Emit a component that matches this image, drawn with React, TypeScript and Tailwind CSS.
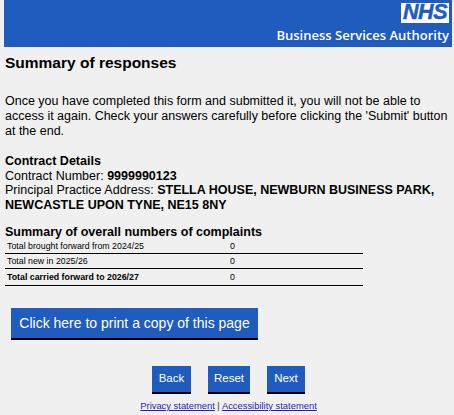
export default function App() {
  return (
    <div className="h-[415px] w-[454px] overflow-hidden bg-[#f0f0f0] font-['Liberation_Sans',Arial,sans-serif] text-black">
      {/* Banner */}
      <div className="mx-[4px] flex h-[47px] w-[448px] flex-col items-end bg-[#1f5cbd] pr-[3px] pt-[3px]">
        <div className="flex h-[20px] w-[48px] items-center justify-center bg-white text-[21.5px] font-bold italic leading-none tracking-[-0.4px] text-[#1f5cbd] [-webkit-text-stroke:0.5px_#1f5cbd]">
          NHS
        </div>
        <div className="mt-[2px] font-['Open_Sans',sans-serif] text-[13px] font-semibold leading-[20px] text-white">
          Business Services Authority
        </div>
      </div>

      <div className="pl-[5px] pr-[4px]">
        <h1 className="mt-[7px] text-[15.5px] font-bold leading-[18px]">Summary of responses</h1>

        <p className="mt-[22px] w-[445px] text-[12.5px] leading-[15px]">
          Once you have completed this form and submitted it, you will not be able to access it again. Check your
          answers carefully before clicking the 'Submit' button at the end.
        </p>

        <div className="mt-[15px] text-[12.5px] leading-[14.5px]">
          <div className="font-bold">Contract Details</div>
          <div>
            Contract Number: <b>9999990123</b>
          </div>
          <div className="w-[445px]">
            Principal Practice Address: <b>STELLA HOUSE, NEWBURN BUSINESS PARK, NEWCASTLE UPON TYNE, NE15 8NY</b>
          </div>
        </div>

        <h2 className="mt-[13px] text-[12.5px] font-bold leading-[14px]">Summary of overall numbers of complaints</h2>

        <div className="w-[358px] text-[8.8px] leading-[14px]">
          <div className="flex h-[15px] items-center border-b border-black pl-[2px]">
            <span className="w-[223px]">Total brought forward from 2024/25</span>
            <span>0</span>
          </div>
          <div className="flex h-[15px] items-center border-b border-black pl-[2px]">
            <span className="w-[223px]">Total new in 2025/26</span>
            <span>0</span>
          </div>
          <div className="flex h-[17px] items-center border-b border-black pl-[2px] font-bold">
            <span className="w-[223px]">Total carried forward to 2026/27</span>
            <span className="font-normal">0</span>
          </div>
        </div>

        <button className="ml-[6px] mt-[22px] block h-[32px] w-[247px] whitespace-nowrap border-b-2 border-black bg-[#1f5cbd] text-center text-[14px] text-white">
          Click here to print a copy of this page
        </button>
      </div>

      <div className="ml-[152px] mt-[26px] flex">
        <button className="h-[28px] w-[39px] border-b-2 border-black bg-[#1f5cbd] text-[11.5px] text-white">Back</button>
        <button className="ml-[17px] h-[28px] w-[42px] border-b-2 border-black bg-[#1f5cbd] text-[11.5px] text-white">Reset</button>
        <button className="ml-[17px] h-[28px] w-[38px] border-b-2 border-black bg-[#1f5cbd] text-[11.5px] text-white">Next</button>
      </div>

      <div className="mt-[6px] pl-[3px] text-center text-[9.4px] leading-[12px] text-[#333]">
        <a href="#" className="text-[#2a1bc4] underline">Privacy statement</a>
        {' | '}
        <a href="#" className="text-[#2a1bc4] underline">Accessibility statement</a>
      </div>
    </div>
  );
}
